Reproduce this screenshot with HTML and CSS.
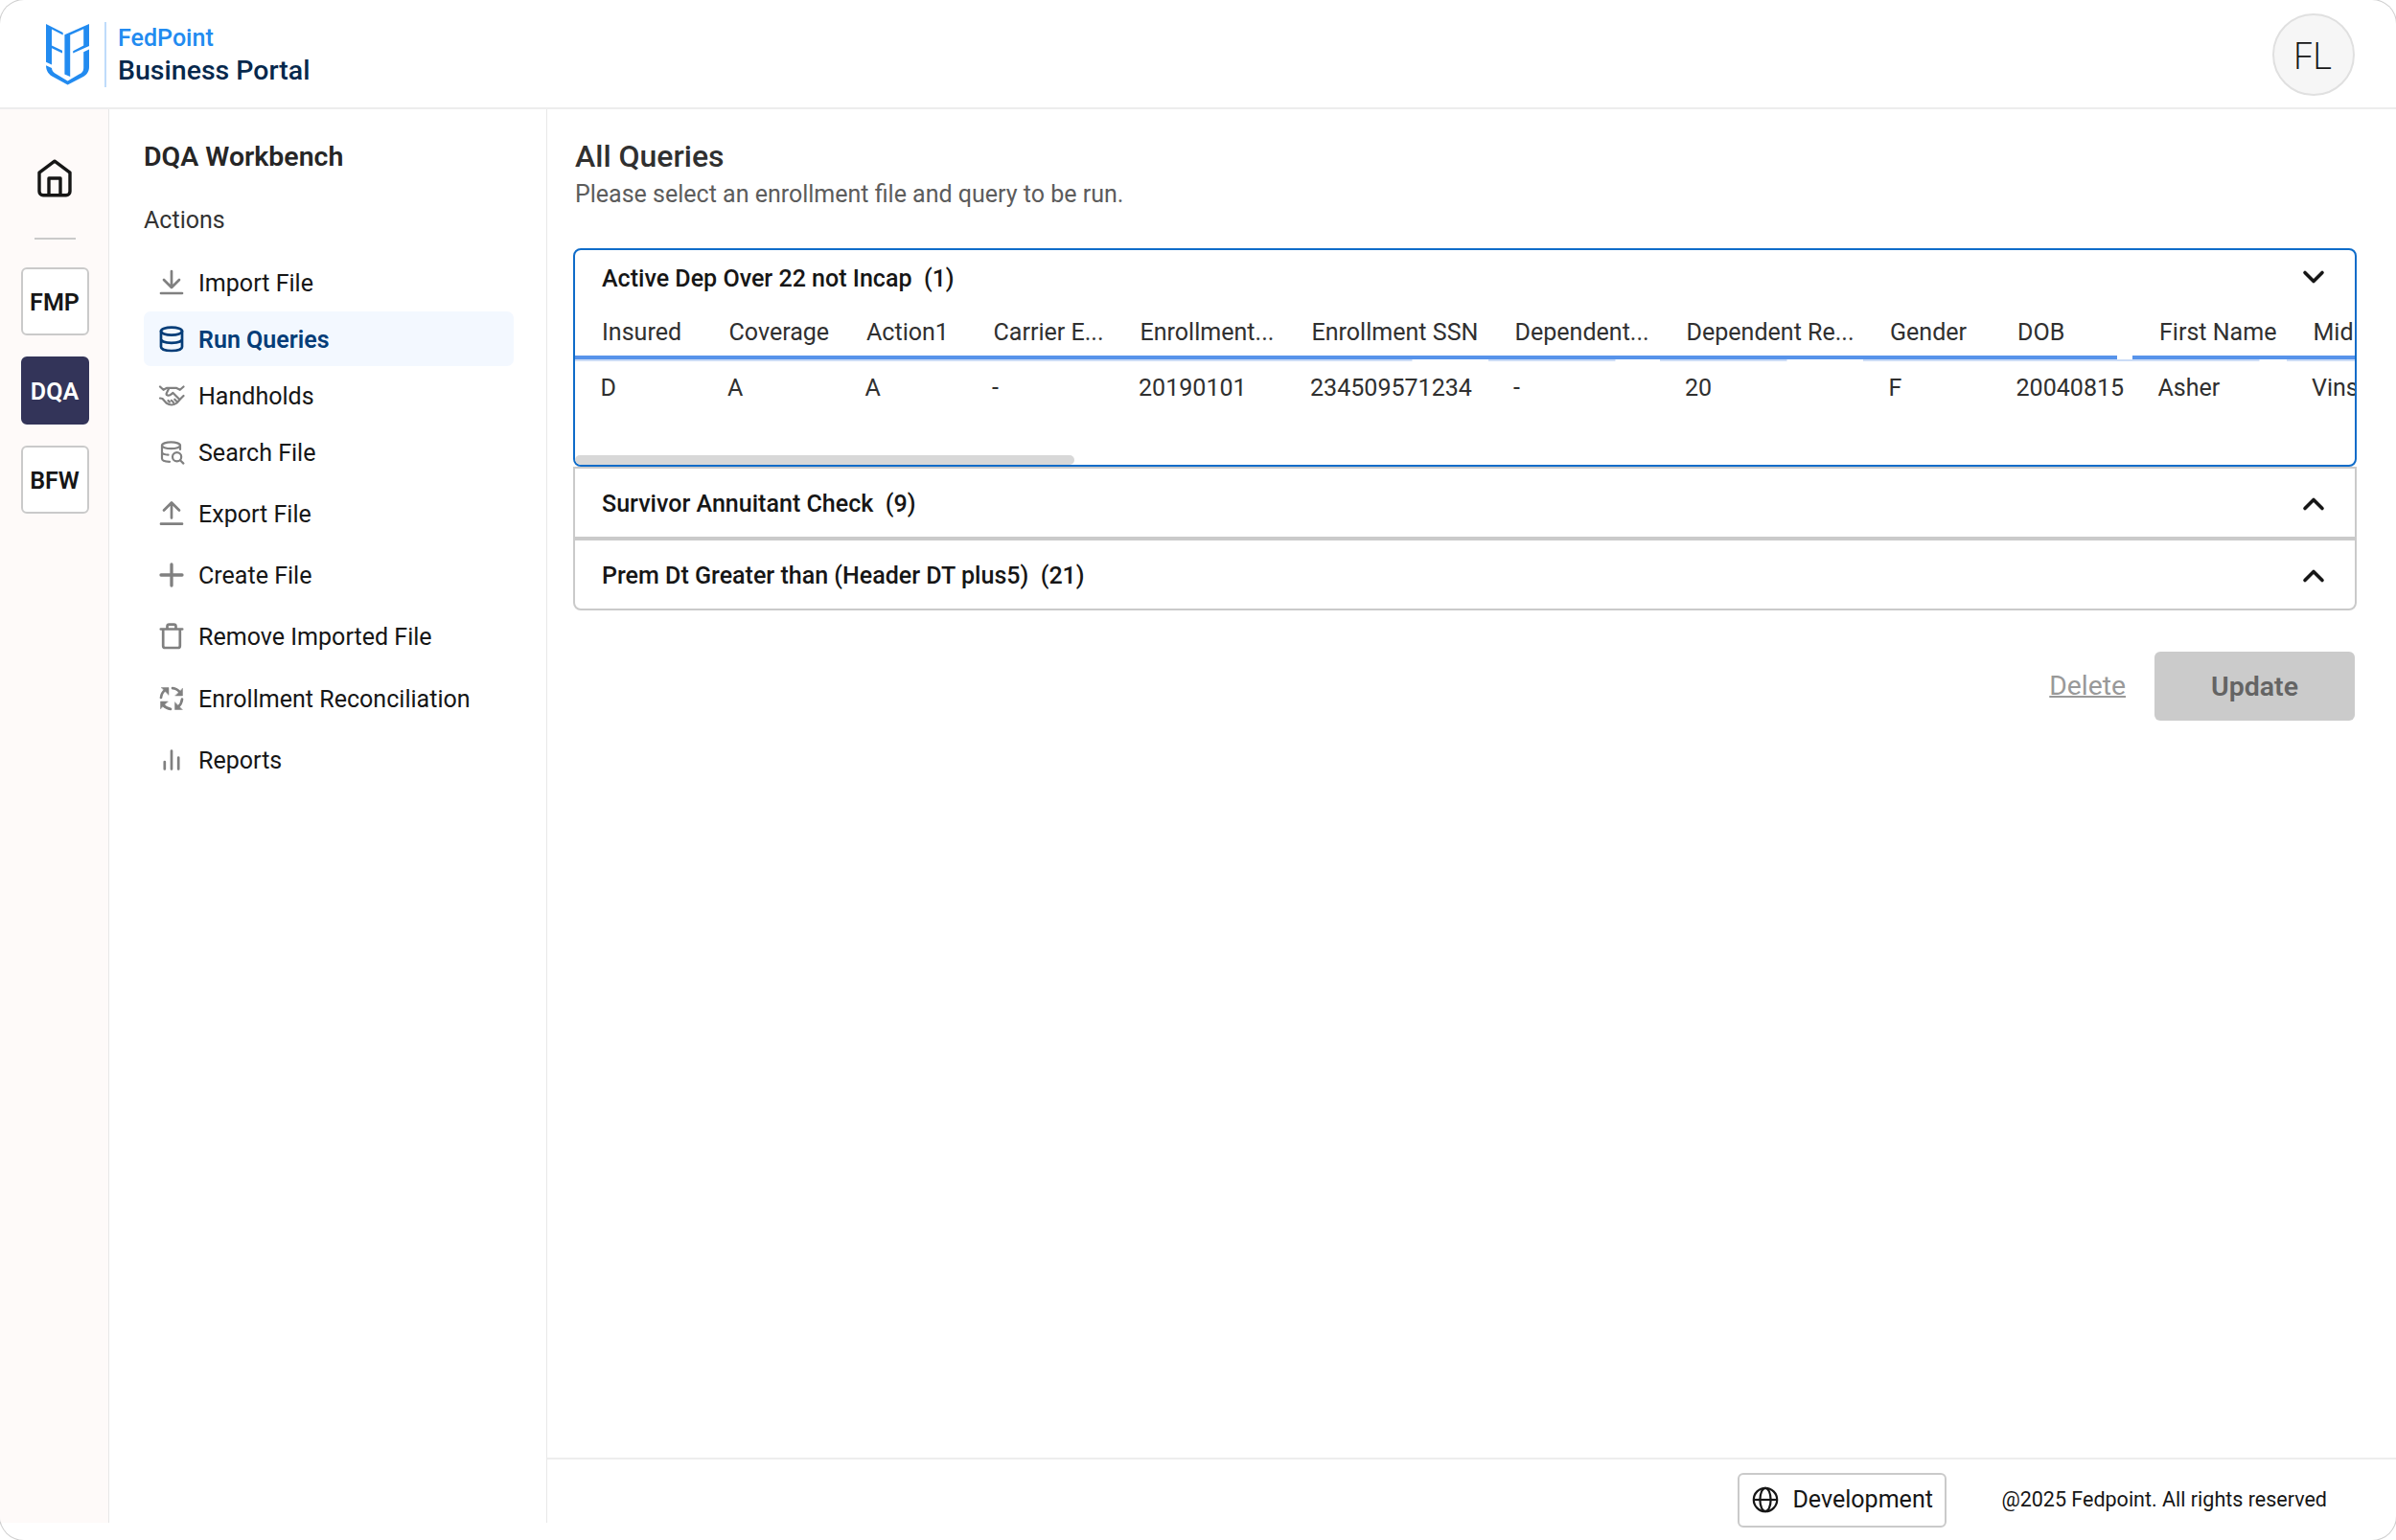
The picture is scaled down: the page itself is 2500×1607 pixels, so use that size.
FILE: index.html
```html
<!DOCTYPE html>
<html lang="en">
<head>
    <meta charset="UTF-8">
    <meta name="viewport" content="width=device-width, initial-scale=1.0">
    <title>FedPoint Business Portal</title>
    <link rel="stylesheet" href="styles.css">
</head>
<body>
    <div class="page">
        <header class="header">
            <div class="brand">
                <svg class="logo" viewBox="0 0 45 64" fill="#228bf0">
                    <path d="M0 0L17.7 9V11.4L6 5.4V22.4L17 27.8V30.4L6 25.2V42.4L0 39.8Z"/>
                    <path d="M19.4 11.2L45 0V23L28.2 30.6V28.2L39.2 22.4V5.2L25.2 11.6V55L19.4 52.4Z"/>
                    <path d="M45 26.6V45C45 50 42 53.5 38 55.6L22.6 63.6L8 55.6C3 53 0 49 0 43.2L6 46C6 49 8 51 11 52.6L22.6 59.4L34.5 52.6C37.5 51 39.2 49.5 39.2 46V29.2Z"/>
                </svg>
                <div class="brand-text">
                    <span class="brand-name">FedPoint</span>
                    <span class="brand-product">Business Portal</span>
                </div>
            </div>
            <div class="avatar">FL</div>
        </header>

        <div class="body">
            <nav class="rail">
                <svg class="home" viewBox="0 0 40 42">
                    <path d="M20 3.2L36 15.2V34.8a4 4 0 0 1-4 4H8a4 4 0 0 1-4-4V15.2Z"/>
                    <path d="M14 38V21h12v17"/>
                </svg>
                <div class="rail-line"></div>
                <a class="rail-btn">FMP</a>
                <a class="rail-btn selected">DQA</a>
                <a class="rail-btn">BFW</a>
            </nav>

            <aside class="sidebar">
                <h2>DQA Workbench</h2>
                <h3>Actions</h3>
                <ul class="menu">
                    <li>
                        <svg viewBox="0 0 28 28"><path d="M14 2v17M6 11l8 8 8-8M3 25h22"/></svg>
                        Import File
                    </li>
                    <li class="active">
                        <svg viewBox="0 0 28 28"><ellipse cx="14" cy="5.6" rx="11" ry="4"/><path d="M3 5.6V22c0 2.4 4.9 4 11 4s11-1.6 11-4V5.6M3 13.8c0 2.4 4.9 4 11 4s11-1.6 11-4"/></svg>
                        Run Queries
                    </li>
                    <li>
                        <svg class="thin" viewBox="0 0 28 28"><path d="M2 4.5l3.5 3.3 3.7-2h9.6l4 2L26.500 4.5M11.5 5.8l-2.8 5.7c-.6 2 2 3 4.3 1.3l2.5-1.8 6.5 6.5M2 16.5l2.5.5 4 4.5c3.5 2.5 8 2.5 11 0l4-4.5 3-3M12 20.5l-1.500-1.500M16 21l-2.2-2.2M19.5 20l-2.2-2.3"/></svg>
                        Handholds
                    </li>
                    <li>
                        <svg class="thin" viewBox="0 0 28 28"><ellipse cx="13.5" cy="6.8" rx="9.5" ry="3.4"/><path d="M4 6.8V20.500c0 1.8 2.8 3.2 8 3.300M23 6.8V11M4 14c.5 1.600 3 2.500 6.500 2.600"/><circle cx="19.6" cy="18.8" r="4.6"/><path d="M23 22.300l3.400 3.300"/></svg>
                        Search File
                    </li>
                    <li class="wide">
                        <svg viewBox="0 0 28 28"><path d="M14 18.500V2.500M6 10.500l8-8 8 8M3 24.700h22"/></svg>
                        Export File
                    </li>
                    <li class="wide">
                        <svg class="bold" viewBox="0 0 28 28"><path d="M14 3v22M3 14h22"/></svg>
                        Create File
                    </li>
                    <li class="wide">
                        <svg viewBox="0 0 28 28"><path d="M2.800 6.500h22.400M5.200 6.500V24a2 2 0 0 0 2 2h13.600a2 2 0 0 0 2-2V6.500M9.500 6V3.600a2 2 0 0 1 2-2h5a2 2 0 0 1 2 2V6"/></svg>
                        Remove Imported File
                    </li>
                    <li class="wide">
                        <svg viewBox="0 0 28 28">
                            <path d="M3 13C3.300 9.500 4.800 7 7.500 4.800M15 3.200c3.200.2 5.800 1.800 8 4.500M25 14.500c-.3 3.500-1.600 6-4.200 8.300M13 24.800c-3.200-.3-5.800-1.800-8-4.300"/>
                            <path class="tips" d="M3.500 2.500H11V10ZM25.500 3.500V11H18ZM25 25.500H17.500V18ZM2.500 24.500V17H10Z"/>
                        </svg>
                        Enrollment Reconciliation
                    </li>
                    <li class="wide">
                        <svg viewBox="0 0 28 28"><path d="M6.800 16v7.500M14 4.500v19M21.200 11.500v12"/></svg>
                        Reports
                    </li>
                </ul>
            </aside>

            <main class="main">
                <div class="content">
                    <h1>All Queries</h1>
                    <p class="hint">Please select an enrollment file and query to be run.</p>

                    <section class="panel open">
                        <div class="panel-head">
                            <span>Active Dep Over 22 not Incap&nbsp; (1)</span>
                            <svg class="chevron" viewBox="0 0 24 16"><path d="M3 3.500l9 9 9-9"/></svg>
                        </div>
                        <div class="row heads">
                            <span>Insured</span>
                            <span>Coverage</span>
                            <span>Action1</span>
                            <span>Carrier E...</span>
                            <span>Enrollment...</span>
                            <span>Enrollment SSN</span>
                            <span>Dependent...</span>
                            <span>Dependent Re...</span>
                            <span>Gender</span>
                            <span class="narrow">DOB</span>
                            <span>First Name</span>
                            <span>Mid</span>
                        </div>
                        <div class="row cells">
                            <span>D</span>
                            <span>A</span>
                            <span>A</span>
                            <span>-</span>
                            <span>20190101</span>
                            <span class="short">234509571234</span>
                            <span class="short">-</span>
                            <span class="short">20</span>
                            <span>F</span>
                            <span>20040815</span>
                            <span class="short">Asher</span>
                            <span>Vins</span>
                        </div>
                        <div class="scrollbar"></div>
                    </section>
                    <section class="panel">
                        <div class="panel-head">
                            <span>Survivor Annuitant Check&nbsp; (9)</span>
                            <svg class="chevron" viewBox="0 0 24 16"><path d="M3 12.500l9-9 9 9"/></svg>
                        </div>
                    </section>
                    <section class="panel last">
                        <div class="panel-head">
                            <span>Prem Dt Greater than (Header DT plus5)&nbsp; (21)</span>
                            <svg class="chevron" viewBox="0 0 24 16"><path d="M3 12.500l9-9 9 9"/></svg>
                        </div>
                    </section>

                    <div class="buttons">
                        <a class="delete">Delete</a>
                        <button class="update">Update</button>
                    </div>
                </div>

                <footer class="footer">
                    <div class="env">
                        <svg viewBox="0 0 28 28"><circle cx="14" cy="14" r="12.200"/><ellipse cx="14" cy="14" rx="5.600" ry="12.200"/><path d="M1.800 14h24.400"/></svg>
                        Development
                    </div>
                    <span class="copyright">@2025 Fedpoint. All rights reserved</span>
                </footer>
            </main>
        </div>
    </div>
</body>
</html>
```
FILE: styles.css
```css
* {
    box-sizing: border-box;
}

body {
    margin: 0;
    background-color: #fff;
    font-family: Roboto, sans-serif;
    font-size: 25.05px;
    line-height: 30px;
    color: #161616;
}

h1, h2, h3, p, ul {
    margin: 0;
    padding: 0;
}

.page {
    height: 1607px;
    display: flex;
    flex-direction: column;
    overflow: hidden;
    border-radius: 25px;
    box-shadow: 0 0 0 1px #d0d0d0;
}

.header {
    height: 114px;
    flex: none;
    display: flex;
    justify-content: space-between;
    align-items: center;
    padding: 2px 43px 0 48px;
    border-bottom: 2px solid #ededed;
}

.brand {
    display: flex;
    align-items: center;
    gap: 16px;
}

.logo {
    width: 45px;
    height: 64px;
}

.brand-text {
    display: flex;
    flex-direction: column;
    justify-content: center;
    height: 68px;
    padding-left: 12px;
    border-left: 2px solid #bfdcfb;
}

.brand-name {
    font-weight: 500;
    line-height: 34px;
    color: #228bf0;
}

.brand-product {
    font-size: 28.5px;
    font-weight: 500;
    line-height: 34px;
    color: #06284c;
}

.avatar {
    width: 86px;
    height: 86px;
    padding-right: 2px;
    border: 2px solid #e0e0e0;
    border-radius: 50%;
    background-color: #f6f6f6;
    font-family: "Open Sans", sans-serif;
    font-size: 39.3px;
    font-weight: 300;
    letter-spacing: 0.5px;
    line-height: 82px;
    text-align: center;
}

.body {
    flex: 1;
    display: flex;
    min-height: 0;
}

.rail {
    width: 114px;
    margin-bottom: 18px;
    padding: 51px 0 0 1px;
    display: flex;
    flex-direction: column;
    align-items: center;
    background-color: #fefaf9;
    border-right: 1px solid #e8e8e8;
}

.home {
    width: 40px;
    height: 42px;
    fill: none;
    stroke: #161616;
    stroke-width: 3.4;
    stroke-linejoin: round;
}

.rail-line {
    width: 43px;
    height: 2px;
    margin: 41px 0 29px;
    background-color: #cacaca;
}

.rail-btn {
    width: 71px;
    height: 71px;
    margin-bottom: 22px;
    border: 2px solid #cacaca;
    border-radius: 6px;
    background-color: #fff;
    font-weight: 600;
    line-height: 69px;
    text-align: center;
}

.rail-btn.selected {
    background-color: #333459;
    border-color: #333459;
    color: #fff;
}

.sidebar {
    width: 457px;
    margin-bottom: 18px;
    padding: 35px 34px 0 36px;
    border-right: 1px solid #e8e8e8;
}

.sidebar h2 {
    font-size: 28.5px;
    font-weight: 600;
    color: #262626;
}

.sidebar h3 {
    margin: 36px 0 21px;
    font-size: 25.05px;
    font-weight: 400;
    color: #333;
}

.menu {
    list-style: none;
}

.menu li {
    height: 57px;
    margin-bottom: 2px;
    padding: 2px 0 0 15px;
    display: flex;
    align-items: center;
    gap: 14px;
    border-radius: 7px;
}

.menu li.wide {
    margin: 7.3px 0;
}

.menu li.active {
    background-color: #f3f8ff;
    color: #053d78;
    font-weight: 600;
}

.menu svg {
    width: 28px;
    height: 28px;
    margin-top: -2px;
    fill: none;
    stroke: #808080;
    stroke-width: 2.7;
    stroke-linecap: round;
    stroke-linejoin: round;
}

.menu svg.thin {
    stroke-width: 2.2;
}

.menu svg.bold {
    stroke-width: 3.3;
}

.menu .active svg {
    stroke: #053d78;
}

.menu .tips {
    fill: #808080;
    stroke-width: 0.5;
}

.main {
    flex: 1;
    min-width: 0;
    display: flex;
    flex-direction: column;
}

.content {
    flex: 1;
    padding: 30px 41px 0 27px;
}

h1 {
    padding-left: 2px;
    font-size: 32px;
    font-weight: 500;
    line-height: 38px;
    color: #303030;
}

.hint {
    margin: 6px 0 41px;
    padding-left: 2px;
    font-size: 25px;
    color: #5c5c5c;
}

.panel {
    height: 75px;
    border: 2px solid #cacaca;
}

.panel.open {
    height: 228px;
    display: flex;
    flex-direction: column;
    overflow: hidden;
    border-color: #0f6cc9;
    border-radius: 8px;
}

.panel.last {
    border-radius: 0 0 8px 8px;
}

.panel-head {
    height: 73px;
    padding: 0 31px 0 28px;
    display: flex;
    justify-content: space-between;
    align-items: center;
    font-weight: 500;
}

.open .panel-head {
    height: 58px;
    flex: none;
    padding-top: 2px;
}

.chevron {
    width: 24px;
    height: 16px;
    fill: none;
    stroke: #161616;
    stroke-width: 3.6;
    stroke-linecap: round;
    stroke-linejoin: round;
}

.open .chevron {
    margin-bottom: 5px;
}

.row {
    display: grid;
    grid-template-columns: 132.5px 143.5px 132.5px 153px 179px 212px 179px 212.5px 133px 148px 160.5px 200px;
    color: #303030;
    white-space: nowrap;
}

.heads span {
    height: 56px;
    padding: 13px 0 0 28px;
    border-bottom: 4px solid #5793ea;
}

.heads .narrow {
    width: 132px;
}

.cells span {
    height: 58px;
    padding: 15px 0 0 26.5px;
    background: linear-gradient(#cbdcf6, #cbdcf6) no-repeat 0 0 / 100% 2px;
}

/* columns whose underline stops before the next one */
.cells .short {
    background-size: 132.5px 2px;
}

.scrollbar {
    width: 521px;
    height: 10px;
    margin-top: auto;
    border-radius: 5px;
    background-color: #d8d8d8;
}

.buttons {
    margin-top: 43px;
    padding-right: 2px;
    display: flex;
    justify-content: flex-end;
    align-items: center;
    gap: 30px;
    font-size: 28.3px;
}

.delete {
    color: #999;
    text-decoration: underline;
    text-decoration-thickness: 2px;
}

.update {
    width: 209px;
    height: 72px;
    border: none;
    border-radius: 6px;
    background-color: #cbcbcb;
    font-family: inherit;
    font-size: 28.5px;
    font-weight: 600;
    color: #646464;
}

.footer {
    height: 86px;
    display: flex;
    justify-content: flex-end;
    align-items: center;
    gap: 57px;
    padding-right: 72px;
    border-top: 2px solid #ededed;
}

.env {
    width: 218px;
    height: 57px;
    padding-left: 13px;
    display: flex;
    align-items: center;
    gap: 14px;
    border: 2px solid #cacaca;
    border-radius: 6px;
}

.env svg {
    width: 28px;
    height: 28px;
    fill: none;
    stroke: #161616;
    stroke-width: 2.2;
}

.copyright {
    font-size: 21.5px;
}
```
